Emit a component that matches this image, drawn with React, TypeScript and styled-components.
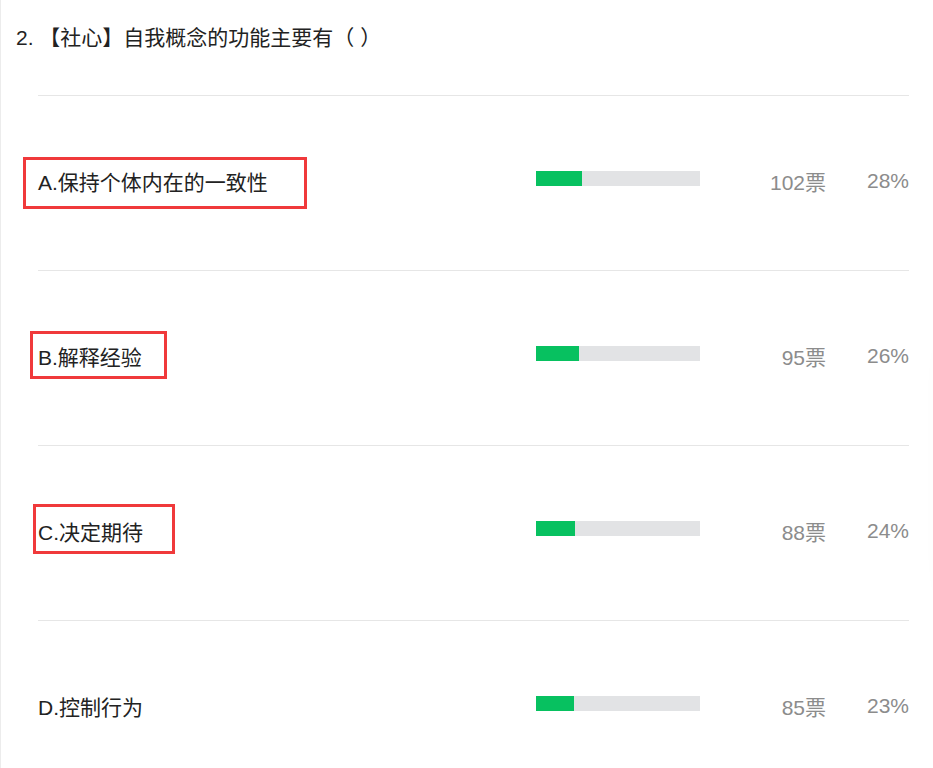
import styled, { createGlobalStyle } from 'styled-components';

const GlobalStyle = createGlobalStyle`
body{
    margin:0;
    background:#fff;
    font-family:"Liberation Sans","Noto Sans CJK SC",sans-serif;
}
`;

const options = [
    { label: 'A.保持个体内在的一致性', votes: 102, pct: 28, mark: { left: -15, top: 61, w: 284, h: 52 } },
    { label: 'B.解释经验', votes: 95, pct: 26, mark: { left: -8, top: 60, w: 137, h: 48 } },
    { label: 'C.决定期待', votes: 88, pct: 24, mark: { left: -5, top: 58, w: 142, h: 50 } },
    { label: 'D.控制行为', votes: 85, pct: 23, mark: null },
];

export default function App() {
    return (
        <Page>
            <GlobalStyle />
            <Question>2. 【社心】自我概念的功能主要有（ ）</Question>
            <List>
                {options.map((o) => (
                    <Row key={o.label}>
                        <Label>{o.label}</Label>
                        <Bar>
                            <Fill style={{ width: `${o.pct}%` }} />
                        </Bar>
                        <Count>{o.votes}票</Count>
                        <Percent>{o.pct}%</Percent>
                        {o.mark && (
                            <Mark $left={o.mark.left} $top={o.mark.top} $w={o.mark.w} $h={o.mark.h} />
                        )}
                    </Row>
                ))}
            </List>
            <SideShadow />
        </Page>
    );
}

const Page = styled.div`
position:relative;
height:768px;
overflow:hidden;
border-left:1px solid #ececec;
box-sizing:border-box;
`;

const Question = styled.div`
padding:24px 0 0 15px;
font-size:21px;
line-height:28px;
color:#222;
`;

const List = styled.div`
margin:43px 24px 0 37px;
`;

const Row = styled.div`
position:relative;
display:grid;
grid-template-columns:498px 164px 126px 83px;
align-items:center;
height:175px;
border-top:1px solid #e6e6e6;
box-sizing:border-box;
`;

const Label = styled.div`
font-size:21px;
color:#222;
margin-top:-5px;
`;

const Bar = styled.div`
height:15px;
background:#e2e3e5;
margin-top:-9px;
`;

const Fill = styled.div`
height:100%;
background:#07c160;
`;

const Count = styled.div`
text-align:right;
font-size:21px;
color:#8c8c8c;
margin-top:-5px;
`;

const Percent = styled.div`
text-align:right;
font-size:21px;
color:#8c8c8c;
margin-top:-5px;
`;

const Mark = styled.div<{ $left: number; $top: number; $w: number; $h: number }>`
position:absolute;
left:${(p) => p.$left}px;
top:${(p) => p.$top}px;
width:${(p) => p.$w}px;
height:${(p) => p.$h}px;
border:3px solid #f0393b;
box-sizing:border-box;
`;

const SideShadow = styled.div`
position:absolute;
left:960px;
top:330px;
width:60px;
height:280px;
border-radius:30px;
box-shadow:0 0 40px rgba(0,0,0,0.08);
`;
